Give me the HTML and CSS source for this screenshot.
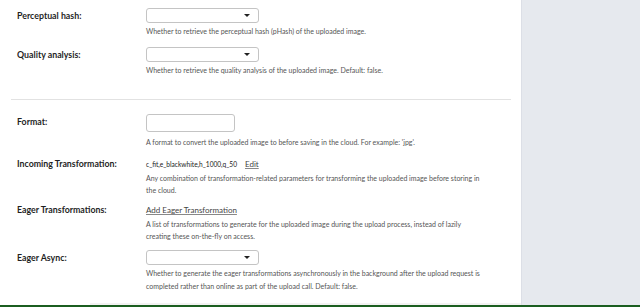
FILE: index.html
```html
<!DOCTYPE html>
<html lang="en">
<head>
  <meta charset="UTF-8">
  <meta name="viewport" content="width=device-width, initial-scale=1.0">
  <title>Upload Preset</title>
  <link rel="stylesheet" href="styles.css">
</head>
<body>
  <div class="layout">
    <div class="main">
      <div class="form">
        <!-- Analysis options -->
        <div class="field">
          <label class="field-label">Perceptual hash:</label>
          <div class="field-body">
            <div class="select"><span class="caret"></span></div>
            <p class="help">Whether to retrieve the perceptual hash (pHash) of the uploaded image.</p>
          </div>
        </div>

        <div class="field">
          <label class="field-label">Quality analysis:</label>
          <div class="field-body">
            <div class="select"><span class="caret"></span></div>
            <p class="help">Whether to retrieve the quality analysis of the uploaded image. Default: false.</p>
          </div>
        </div>

        <hr class="divider">

        <!-- Transformations -->
        <div class="field">
          <label class="field-label">Format:</label>
          <div class="field-body">
            <input type="text" class="text-input">
            <p class="help help-loose">A format to convert the uploaded image to before saving in the cloud. For example: 'jpg'.</p>
          </div>
        </div>

        <div class="field field-tight">
          <label class="field-label field-label-text">Incoming Transformation:</label>
          <div class="field-body">
            <div class="value-row">
              <span class="value">c_fit,e_blackwhite,h_1000,q_50</span>
              <a href="#" class="link">Edit</a>
            </div>
            <p class="help">Any combination of transformation-related parameters for transforming the uploaded image before storing in the cloud.</p>
          </div>
        </div>

        <div class="field field-tight">
          <label class="field-label field-label-text">Eager Transformations:</label>
          <div class="field-body">
            <div class="value-row">
              <a href="#" class="link">Add Eager Transformation</a>
            </div>
            <p class="help">A list of transformations to generate for the uploaded image during the upload process, instead of lazily creating these on-the-fly on access.</p>
          </div>
        </div>

        <div class="field">
          <label class="field-label">Eager Async:</label>
          <div class="field-body">
            <div class="select"><span class="caret"></span></div>
            <p class="help help-wide">Whether to generate the eager transformations asynchronously in the background after the upload request is completed rather than online as part of the upload call. Default: false.</p>
          </div>
        </div>
      </div>
      <div class="footer-edge"></div>
    </div>
    <div class="sidebar"></div>
  </div>
  <div class="bottom-bar"></div>
</body>
</html>
```

FILE: styles.css
```css
* {
  margin: 0;
  padding: 0;
  box-sizing: border-box;
}

body {
  height: 307px;
  overflow: hidden;
  font-family: Lato, 'Liberation Sans', sans-serif;
  background: #ffffff;
  color: #222222;
  display: flex;
  flex-direction: column;
}

.layout {
  flex: 1;
  display: flex;
  min-height: 0;
}

.main {
  width: 521px;
  background: white;
  display: flex;
  flex-direction: column;
  overflow: hidden;
}

.form {
  flex: 1;
  padding: 8px 10px 0 11px;
}

.sidebar {
  flex: 1;
  background: #e6e9ee;
  border-left: 1px solid #dcdfe6;
}

.field {
  display: grid;
  grid-template-columns: 129px 1fr;
  padding-left: 6px;
  margin-bottom: 10px;
}

.field-tight {
  margin-bottom: 8px;
}

.field-label {
  font-size: 8.8px;
  font-weight: 700;
  color: #1f1f1f;
  line-height: 15px;
}

.field-label-text {
  line-height: 12px;
}

.select {
  position: relative;
  width: 113px;
  height: 15px;
  border: 1px solid #c4c4c4;
  border-radius: 3px;
  background: white;
}

.caret {
  position: absolute;
  right: 8px;
  top: 5px;
  border-left: 3px solid transparent;
  border-right: 3px solid transparent;
  border-top: 3px solid #222;
}

.text-input {
  display: block;
  width: 89px;
  height: 18px;
  border: 1px solid #c4c4c4;
  border-radius: 3px;
  background: white;
}

.help {
  font-size: 7px;
  line-height: 12px;
  color: #555555;
  margin-top: 2px;
  max-width: 340px;
}

.help-loose {
  margin-top: 4px;
}

.help-wide {
  line-height: 13px;
}

.value-row {
  display: flex;
  align-items: baseline;
  gap: 8px;
  line-height: 12px;
}

.value {
  font-size: 6.6px;
  color: #1a1a1a;
}

.link {
  font-size: 8px;
  color: #444444;
  text-decoration: underline;
  text-decoration-color: #888888;
}

.divider {
  border: none;
  border-top: 1px solid #e2e2e2;
  width: 500px;
  margin: 23px 0 14px 0;
}

.footer-edge {
  height: 8px;
  margin-left: 90px;
  background: #f2f2f2;
}

.bottom-bar {
  height: 2px;
  background: #1b5e20;
}
```
